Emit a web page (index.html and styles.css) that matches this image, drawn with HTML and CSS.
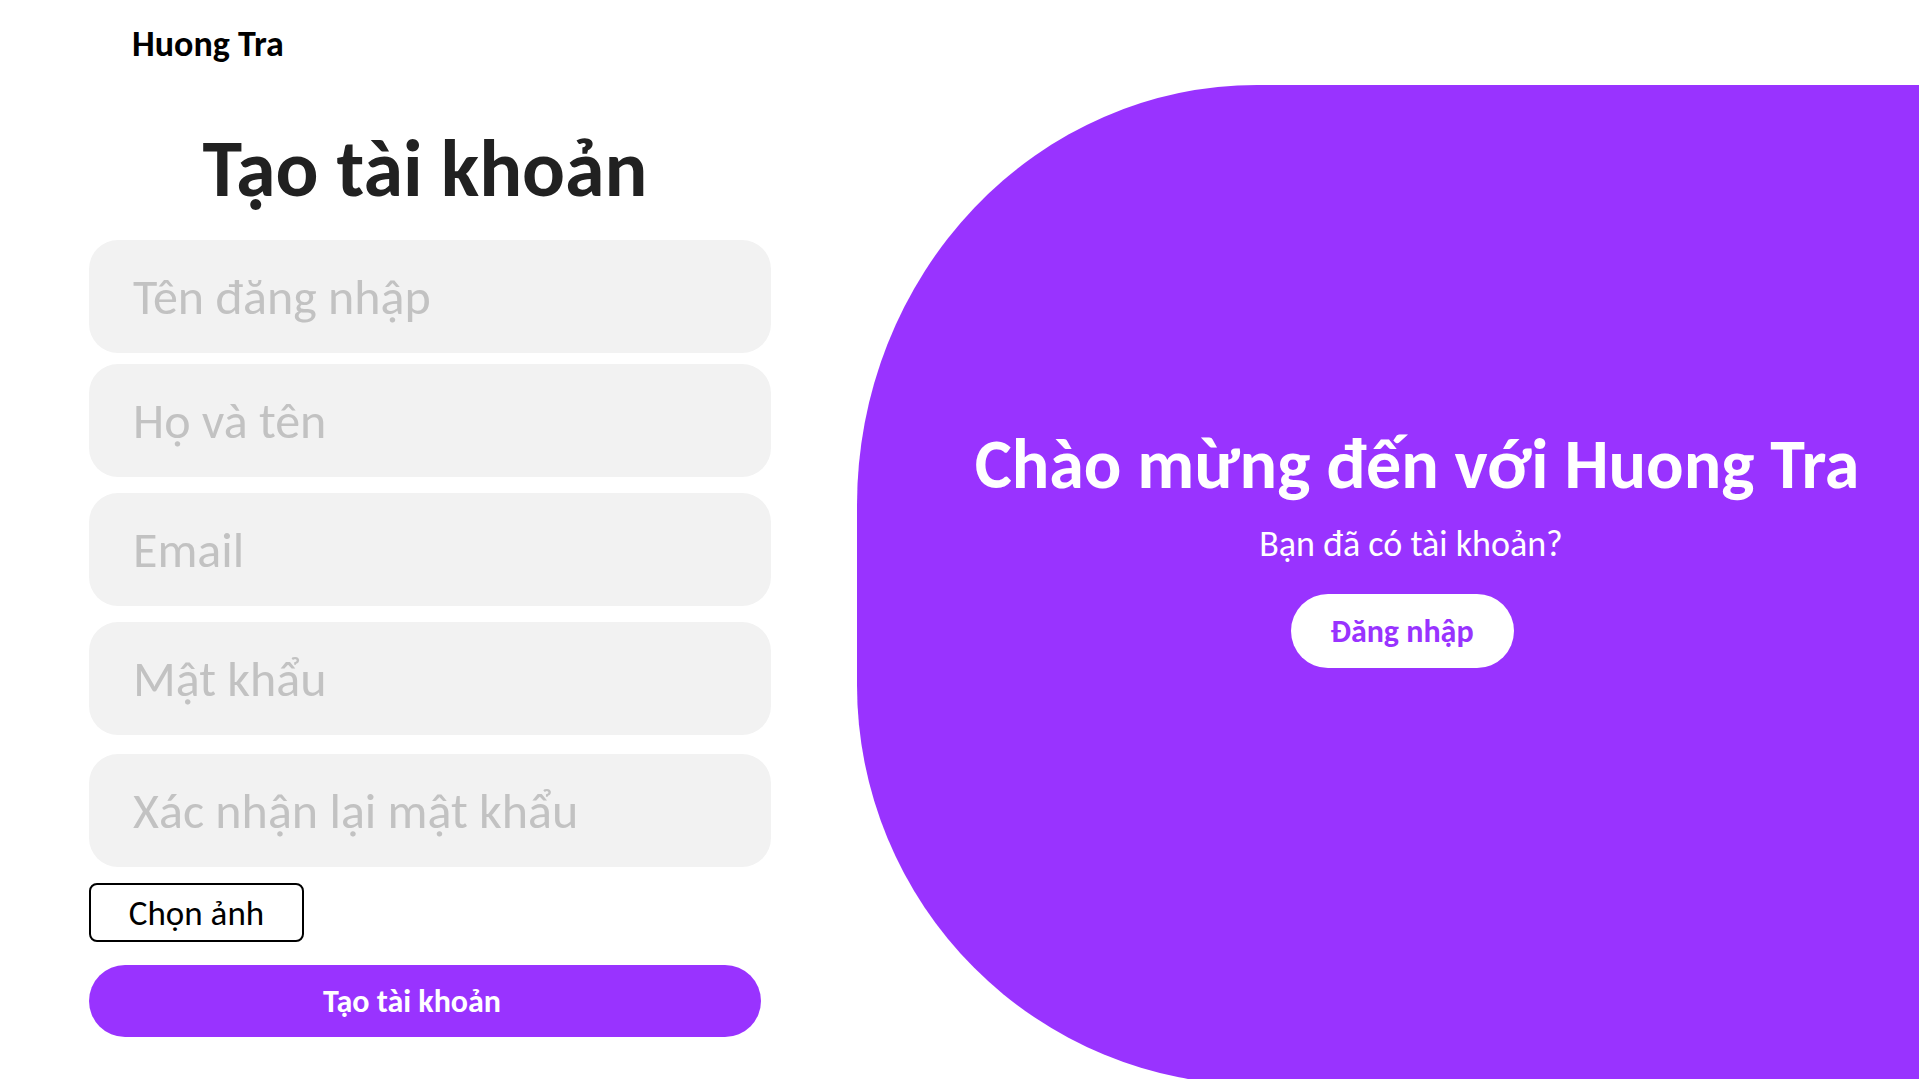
FILE: index.html
```html
<!DOCTYPE html>
<html lang="vi">
<head>
<meta charset="utf-8">
<title>Huong Tra - Tạo tài khoản</title>
<link rel="stylesheet" href="styles.css">
</head>
<body>
<div class="page">
  <section class="left">
    <header class="brand">Huong Tra</header>
    <form class="form">
      <h1 class="form-title">Tạo tài khoản</h1>
      <input class="field" type="text" placeholder="Tên đăng nhập">
      <input class="field field-close" type="text" placeholder="Họ và tên">
      <input class="field" type="email" placeholder="Email">
      <input class="field" type="password" placeholder="Mật khẩu">
      <input class="field field-far" type="password" placeholder="Xác nhận lại mật khẩu">
      <label class="file-btn">Chọn ảnh<input class="file-input" type="file"></label>
      <button class="submit" type="button">Tạo tài khoản</button>
    </form>
  </section>
  <section class="panel">
    <h2 class="panel-title">Chào mừng đến với Huong Tra</h2>
    <p class="panel-sub">Bạn đã có tài khoản?</p>
    <button class="login-btn" type="button">Đăng nhập</button>
  </section>
</div>
</body>
</html>
```

FILE: styles.css
```css
* { box-sizing: border-box; }

html, body {
  margin: 0;
  padding: 0;
  background: #ffffff;
}

body {
  font-family: Carlito, Calibri, Lato, "Liberation Sans", sans-serif;
  color: #000;
}

.page {
  display: flex;
  width: 100%;
  height: 100vh;
  overflow: hidden;
}

.left {
  flex: 0 0 857px;
  padding-top: 23px;
}

.brand {
  font-size: 36px;
  line-height: 42px;
  font-weight: 700;
  padding-left: 132px;
}

.form {
  margin: 56px 0 0 89px;
  width: 682px;
  display: flex;
  flex-direction: column;
  align-items: flex-start;
  gap: 16px;
}

.form-title {
  margin: 0 0 7px 0;
  width: 672px;
  text-align: center;
  font-size: 80px;
  line-height: 96px;
  font-weight: 700;
  color: #212121;
}

.field {
  width: 682px;
  height: 113px;
  border: none;
  outline: none;
  border-radius: 29px;
  background: #f2f2f2;
  padding: 0 0 0 44px;
  font-family: inherit;
  font-size: 50px;
  color: #333;
}

.field-close {
  margin-top: -5px;
}

.field-far {
  margin-top: 3px;
}

.field::placeholder {
  color: #c2c2c2;
}

.file-btn {
  display: flex;
  align-items: center;
  justify-content: center;
  width: 215px;
  height: 59px;
  border: 2px solid #000;
  border-radius: 8px;
  background: #fff;
  font-size: 35px;
  color: #000;
  cursor: pointer;
}

.file-input {
  display: none;
}

.submit {
  margin-top: 7px;
  width: 672px;
  height: 72px;
  border: none;
  border-radius: 36px;
  background: #9933ff;
  color: #fff;
  font-family: inherit;
  font-size: 32px;
  font-weight: 700;
  padding: 0 26px 0 0;
  cursor: pointer;
}

.panel {
  flex: 0 0 1120px;
  margin-top: 85px;
  height: 1000px;
  background: #9933ff;
  border-radius: 400px 60px 0 400px / 420px 60px 0 400px;
  display: flex;
  flex-direction: column;
  align-items: center;
  padding-top: 337px;
  color: #fff;
}

.panel-title {
  margin: 0;
  font-size: 70px;
  line-height: 84px;
  font-weight: 700;
}

.panel-sub {
  margin: 17px 0 0 0;
  font-size: 36px;
  line-height: 42px;
  transform: translateX(-6px);
}

.login-btn {
  margin-top: 29px;
  width: 223px;
  height: 74px;
  border: none;
  border-radius: 37px;
  background: #fff;
  color: #9933ff;
  font-family: inherit;
  font-size: 32px;
  font-weight: 700;
  cursor: pointer;
  transform: translateX(-15px);
}
```
